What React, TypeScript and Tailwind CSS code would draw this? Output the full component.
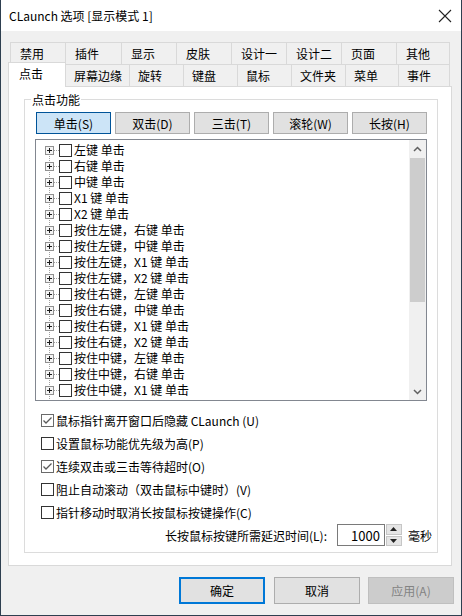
import React from "react";

const topTabs: [string, string][] = [
  ["禁用", "w-[55px]"],
  ["插件", "w-[56px]"],
  ["显示", "w-[55px]"],
  ["皮肤", "w-[55px]"],
  ["设计一", "w-[55px]"],
  ["设计二", "w-[55px]"],
  ["页面", "w-[55px]"],
  ["其他", "w-[54px]"],
];

const bottomTabs: [string, string][] = [
  ["屏幕边缘", "w-[63px] border-l-0"],
  ["旋转", "w-[54px]"],
  ["键盘", "w-[54px]"],
  ["鼠标", "w-[54px]"],
  ["文件夹", "w-[54px]"],
  ["菜单", "w-[53px]"],
  ["事件", "w-[52px] border-r"],
];

const rows = [
  "左键 单击",
  "右键 单击",
  "中键 单击",
  "X1 键 单击",
  "X2 键 单击",
  "按住左键，右键 单击",
  "按住左键，中键 单击",
  "按住左键，X1 键 单击",
  "按住左键，X2 键 单击",
  "按住右键，左键 单击",
  "按住右键，中键 单击",
  "按住右键，X1 键 单击",
  "按住右键，X2 键 单击",
  "按住中键，左键 单击",
  "按住中键，右键 单击",
  "按住中键，X1 键 单击",
  "按住中键，X2 键 单击",
];

const modes = ["单击(S)", "双击(D)", "三击(T)", "滚轮(W)", "长按(H)"];

function Check({ checked }: { checked?: boolean }) {
  return (
    <svg width="13" height="13" viewBox="0 0 13 13" className="shrink-0">
      <rect
        x="0.5"
        y="0.5"
        width="12"
        height="12"
        fill="#fff"
        stroke={checked ? "#6a6a6a" : "#333"}
      />
      {checked && (
        <path d="M2.5 6.5 L5 9 L10.5 3.5" fill="none" stroke="#5a5a5a" strokeWidth="1.3" />
      )}
    </svg>
  );
}

function TreeConnector({ first }: { first: boolean }) {
  return (
    <svg width="19" height="16" viewBox="0 0 19 16" className="shrink-0">
      <line
        x1="9.5"
        y1={first ? 8 : 0}
        x2="9.5"
        y2="16"
        stroke="#a0a0a0"
        strokeDasharray="1 1"
      />
      <line x1="14" y1="8.5" x2="19" y2="8.5" stroke="#a0a0a0" strokeDasharray="1 1" />
      <rect x="5.5" y="4.5" width="8" height="8" fill="#f4f4f4" stroke="#919191" />
      <line x1="7" y1="8.5" x2="12" y2="8.5" stroke="#1a1a1a" />
      <line x1="9.5" y1="6" x2="9.5" y2="11" stroke="#1a1a1a" />
    </svg>
  );
}

export default function App() {
  return (
    <div className="w-[462px] h-[616px] flex flex-col bg-[#f0f0f0] border-x border-b border-[#2e3f50] font-['Noto_Sans_CJK_SC','Noto_Sans',sans-serif] text-[12px] text-black overflow-hidden">
      {/* Title bar */}
      <div className="h-[31px] shrink-0 bg-white flex items-center justify-between pl-[8px] pr-[9px]">
        <span className="text-[12px] leading-[17px]">CLaunch 选项 [显示模式 1]</span>
        <svg width="14" height="14" viewBox="0 0 14 14">
          <path d="M1 1 L13 13 M13 1 L1 13" stroke="#222" strokeWidth="1.1" />
        </svg>
      </div>

      {/* Tabs */}
      <div className="pt-[11px] flex flex-col">
        <div className="flex ml-[9px] h-[22px]">
          {topTabs.map(([t, w], i) => (
            <div
              key={t}
              className={`${w} h-[22px] border-t border-l border-[#d9d9d9] bg-[#f0f0f0] flex items-center pl-[9px] leading-[17px] ${
                i === topTabs.length - 1 ? "border-r" : ""
              }`}
            >
              {t}
            </div>
          ))}
        </div>
        <div className="flex ml-[7px] h-[22px]">
          <div className="relative z-10 w-[58px] h-[25px] -mt-[2px] bg-white border-t border-l border-r border-[#d9d9d9] flex items-start pt-[2px] pl-[10px] leading-[17px]">
            点击
          </div>
          {bottomTabs.map(([t, w]) => (
            <div
              key={t}
              className={`${w} h-[22px] border-t border-l border-[#d9d9d9] bg-[#f0f0f0] flex items-center pl-[8px] leading-[17px]`}
            >
              {t}
            </div>
          ))}
        </div>
      </div>

      {/* Panel */}
      <div className="ml-[7px] w-[444px] h-[480px] shrink-0 bg-white border border-[#d9d9d9] flex flex-col">
        <div className="relative ml-[15px] mt-[12px] w-[414px] h-[454px] border border-[#dcdcdc] flex flex-col">
          <span className="absolute left-[6px] -top-[9px] bg-white px-[1px] leading-[17px]">
            点击功能
          </span>

          {/* Mode buttons */}
          <div className="flex gap-[4px] ml-[11px] mt-[12px]">
            {modes.map((m, i) => (
              <div
                key={m}
                className={`w-[75px] h-[22px] flex items-center justify-center leading-[17px] border ${
                  i === 0
                    ? "bg-[#cce4f7] border-[#005499]"
                    : "bg-[#e1e1e1] border-[#adadad]"
                }`}
              >
                {m}
              </div>
            ))}
          </div>

          {/* Tree */}
          <div className="ml-[10px] mt-[5px] w-[392px] h-[262px] border border-[#828790] bg-white flex overflow-hidden">
            <div className="flex-1 overflow-hidden pt-[2px] pl-[4px]">
              {rows.map((r, i) => (
                <div key={r} className="h-[16px] flex items-center">
                  <TreeConnector first={i === 0} />
                  <Check />
                  <span className="ml-[2px] leading-[16px] whitespace-pre">{r}</span>
                </div>
              ))}
            </div>
            <div className="w-[17px] shrink-0 bg-[#f0f0f0] flex flex-col">
              <div className="h-[17px] flex items-center justify-center">
                <svg width="9" height="6" viewBox="0 0 9 6">
                  <path d="M1 5 L4.5 1.5 L8 5" fill="none" stroke="#606060" strokeWidth="1.5" />
                </svg>
              </div>
              <div className="flex-1 flex flex-col">
                <div className="mt-[1px] h-[144px] mx-[1px] bg-[#cdcdcd]" />
              </div>
              <div className="h-[17px] flex items-center justify-center">
                <svg width="9" height="6" viewBox="0 0 9 6">
                  <path d="M1 1 L4.5 4.5 L8 1" fill="none" stroke="#606060" strokeWidth="1.5" />
                </svg>
              </div>
            </div>
          </div>

          {/* Options */}
          <div className="mt-[8px] ml-[16px] flex flex-col">
            {[
              ["鼠标指针离开窗口后隐藏 CLaunch (U)", true],
              ["设置鼠标功能优先级为高(P)", false],
              ["连续双击或三击等待超时(O)", true],
              ["阻止自动滚动（双击鼠标中键时）(V)", false],
              ["指针移动时取消长按鼠标按键操作(C)", false],
            ].map(([t, c]) => (
              <div key={t as string} className="h-[23px] flex items-center gap-[2px]">
                <Check checked={c as boolean} />
                <span className="leading-[17px]">{t as string}</span>
              </div>
            ))}
          </div>

          <div className="h-[22px] flex items-center justify-end pr-[5px]">
            <span className="leading-[17px]">长按鼠标按键所需延迟时间(L):</span>
            <div className="ml-[10px] w-[48px] h-[22px] border border-[#7a7a7a] bg-white flex items-center justify-end pr-[4px] leading-[17px] text-[13px]">
              1000
            </div>
            <div className="ml-[1px] w-[16px] h-[22px] flex flex-col gap-[1px]">
              <div className="flex-1 bg-[#e5e5e5] border border-[#c6c6c6] flex items-center justify-center">
                <svg width="7" height="4" viewBox="0 0 7 4">
                  <path d="M0 4 L3.5 0 L7 4 Z" fill="#222" />
                </svg>
              </div>
              <div className="flex-1 bg-[#e5e5e5] border border-[#c6c6c6] flex items-center justify-center">
                <svg width="7" height="4" viewBox="0 0 7 4">
                  <path d="M0 0 L3.5 4 L7 0 Z" fill="#222" />
                </svg>
              </div>
            </div>
            <span className="ml-[6px] leading-[17px]">毫秒</span>
          </div>
        </div>
      </div>

      {/* Bottom buttons */}
      <div className="mt-[11px] flex justify-end gap-[8px] pr-[7px]">
        <div className="w-[86px] h-[27px] mr-[1px] bg-[#e1e1e1] border-2 border-[#0078d7] flex items-center justify-center leading-[17px]">
          确定
        </div>
        <div className="w-[86px] h-[27px] bg-[#e1e1e1] border border-[#adadad] flex items-center justify-center leading-[17px]">
          取消
        </div>
        <div className="w-[86px] h-[27px] bg-[#cccccc] border border-[#bfbfbf] text-[#838383] flex items-center justify-center leading-[17px]">
          应用(A)
        </div>
      </div>
    </div>
  );
}
